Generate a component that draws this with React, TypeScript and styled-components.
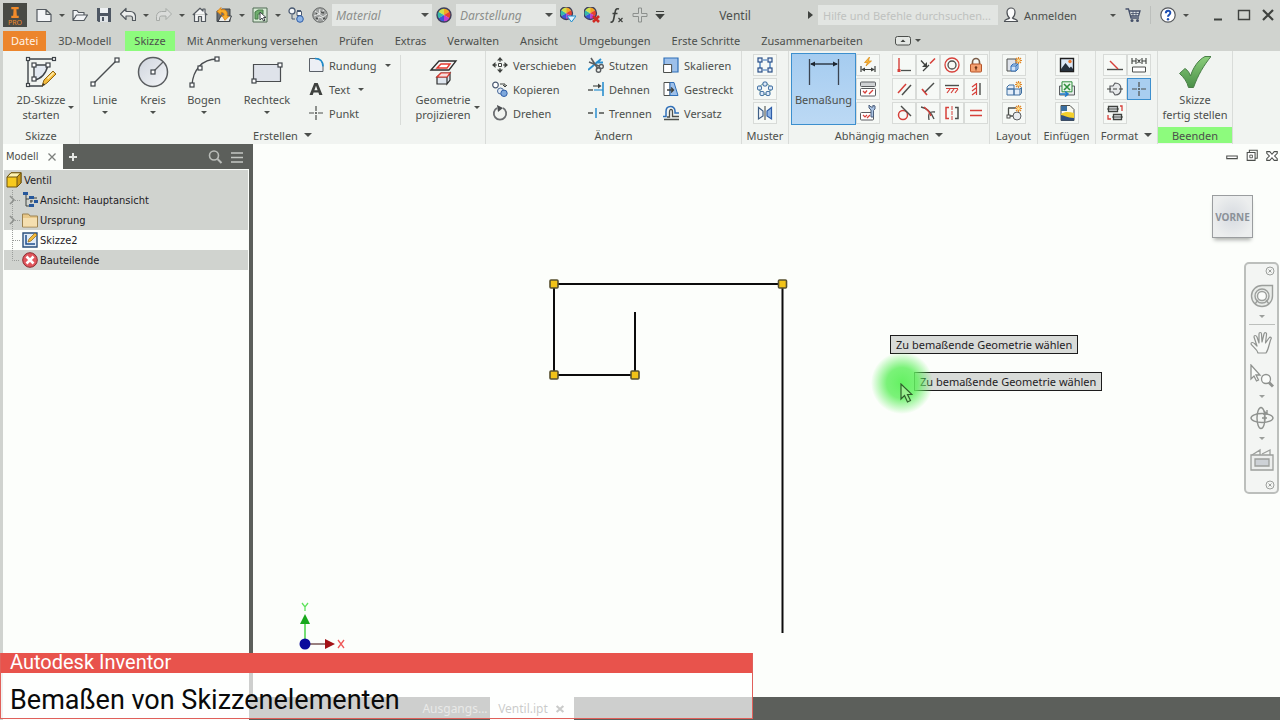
import React, { ReactNode } from "react";
import styled, { createGlobalStyle, css } from "styled-components";

const C = {
  chrome: "#d0d3cf",
  ribbon: "#f1f4f1",
  dark: "#5c5f5b",
  text: "#4c4f4c",
  line: "#d9dcd9",
  paper: "#fcfefb",
  green: "#8dfb7d",
  blue: "#3c8fce",
};

const GlobalStyle = createGlobalStyle`
  *, *::before, *::after { box-sizing: border-box; }
  html, body, #root { height: 100%; }
  body { margin: 0; background: ${C.chrome}; overflow: hidden; }
  body, button, input, select { font-family: "Noto Sans", "Open Sans", sans-serif; font-size: 11px; color: ${C.text}; }
  button { background: none; border: 0; padding: 0; margin: 0; cursor: pointer; }
  svg { display: block; flex: none; }
`;

/* ---------- drawings ---------- */

const node = (x: number, y: number, s = 4) => (
  <rect x={x - s / 2} y={y - s / 2} width={s} height={s} fill="#fff" stroke="#3f4449" strokeWidth="1.200" />
);

const wheel = (
  <>
    <path d="M8 8V1A7 7 0 0 1 14 4.500Z" fill="#f5a623" />
    <path d="M8 8 14 4.500A7 7 0 0 1 14 11.500Z" fill="#e8432e" />
    <path d="M8 8 14 11.500A7 7 0 0 1 8 15Z" fill="#c23bd0" />
    <path d="M8 8V15A7 7 0 0 1 2 11.500Z" fill="#3a57d8" />
    <path d="M8 8 2 11.500A7 7 0 0 1 2 4.500Z" fill="#35b8a8" />
    <path d="M8 8 2 4.500A7 7 0 0 1 8 1Z" fill="#cfe24a" />
    <circle cx="8" cy="8" r="7" fill="none" stroke="#3d3f5c" strokeWidth="1.400" />
  </>
);

const sun = (
  <g stroke="#e08a2c" strokeWidth="1.200">
    <path d="M12.500 0v7M9 3.500h7M10 1l5 5M15 1l-5 5" />
    <circle cx="12.500" cy="3.500" r="1.500" fill="#ffe08a" stroke="none" />
  </g>
);

const art: Record<string, ReactNode> = {
  newFile: <path d="M1 2.500h9l5 5v7H1zM10 2.500v5h5" fill="#f2f4f6" stroke="#53595f" strokeWidth="1.200" />,
  open: <path d="M1 13V3.500h4l1.500 2H12V8M1 13.500 4.500 8H15.500L12 13.500z" fill="#f2f4f6" stroke="#53595f" strokeWidth="1.200" strokeLinejoin="round" />,
  save: (
    <>
      <path d="M1 1h14v14H2.500L1 13.500z" fill="#4e5763" />
      <path d="M4 1h8v5H4z" fill="#eef1f3" />
      <path d="M4 9h8v6H4z" fill="#dfe3e6" />
      <path d="M6 10h2v4H6z" fill="#4e5763" />
    </>
  ),
  undo: <path d="M.5 7 6 1.500v3H10.500a5 5 0 0 1 5 5V13.500h-3V10.500A2 2 0 0 0 10.500 9H6v3.500z" fill="#eceeed" stroke="#53595f" strokeWidth="1.200" strokeLinejoin="round" />,
  redo: <path d="M15.500 7 10 1.500v3H5.500a5 5 0 0 0-5 5V13.500h3V10.500A2 2 0 0 1 5.500 9H10v3.500z" fill="#dadcda" stroke="#a6aaa7" strokeLinejoin="round" />,
  home: <path d="M.8 8 8 1.200 11 4V2h2v4l2.300 2M2.500 7v7.500h4v-5h3v5h4V7" fill="#f4f5f5" stroke="#53595f" strokeWidth="1.200" strokeLinejoin="round" />,
  back: (
    <>
      <path d="M1 4h3.500l1.500-2h8v12.500H1z" fill="#6a6f73" stroke="#3f4449" />
      <path d="M2 14.500 5 9h10.500l-2.500 5.500z" fill="#eceeee" stroke="#3f4449" />
      <path d="M1 4.500 5 .5v2.300c5-1 7 2 6 6.200l2 .3-4 4-3-4.800 2 .2c.5-2-.5-3.500-3-3.400V8z" fill="#f9ae2c" stroke="#d97c12" strokeWidth=".8" />
    </>
  ),
  pick: (
    <>
      <path d="M1 1h14v14H1z" fill="#d7ead5" stroke="#4f6b52" />
      <path d="M3 12V5l3-2h5v4H6v5z" fill="#6fae6d" stroke="#477a48" />
      <path d="M8 5v8l2-2 1.500 3 1.500-.7-1.500-2.800H14z" fill="#fff" stroke="#3f4449" />
    </>
  ),
  linkUp: (
    <>
      <circle cx="4" cy="4" r="3" fill="#f4f6f8" stroke="#4a5a72" strokeWidth="1.300" />
      <path d="M9 3.500h4M4 8v4h3" stroke="#4a5a72" fill="none" />
      <path d="M9 4.500h4.500v4H9z" fill="#fff" stroke="#4a5a72" />
      <circle cx="12" cy="12" r="3.300" fill="#8fb5e6" stroke="#2f5ea8" />
    </>
  ),
  globe: (
    <>
      <circle cx="8" cy="8" r="7.300" fill="#9fa2a1" stroke="#6a6d6c" />
      <path d="M3 4l4 3 5-4M2 9l5-2 4 3 4-3M5 14l2-4 3 1 2 3M7 7l1-5" stroke="#e6e8e7" fill="none" />
      <path d="M4 11l2 1M9 5l3 1M4 6l1 1M11 12l2-1" stroke="#4d504f" strokeWidth="1.500" />
    </>
  ),
  wheel,
  wheelDown: (
    <>
      <g transform="translate(-1 -1) scale(.9)">{wheel}</g>
      <path d="M7 9h9l-4.500 6z" fill="#dff3ff" stroke="#1c8ccc" />
    </>
  ),
  wheelX: (
    <>
      <g transform="translate(-1 -1) scale(.9)">{wheel}</g>
      <path d="M9 9l6 6M15 9l-6 6" stroke="#cf2a22" strokeWidth="2.600" />
    </>
  ),
  fx: (
    <>
      <path d="M2.500 15c2 .5 2.800-1 3.200-3L7.200 4.500C7.600 2 9 1.300 11 2M4.500 6.500h5" stroke="#3d403d" strokeWidth="1.600" fill="none" />
      <path d="M10.500 11l4 4M14.500 11l-4 4" stroke="#3d403d" strokeWidth="1.200" />
    </>
  ),
  plus: <path d="M6.500 1h3v5.500H15v3H9.500V15h-3V9.500H1v-3h5.500z" fill="#d2d5d2" stroke="#8c908d" />,
  menuCaret: <path d="M4 4.500h8M4.500 7.500h7L8 11.500z" stroke="#3f423f" strokeWidth="1.200" fill="#3f423f" />,
  user: <path d="M1.500 14.500c0-2.500 3.500-2 5-3.500C4.500 9.500 4 7 4 5a4 4 0 0 1 8 0c0 2-.5 4.500-2.500 6 1.500 1.500 5 1 5 3.500z" fill="#fbfcfc" stroke="#4c5055" strokeWidth="1.200" />,
  cart: (
    <>
      <path d="M.5 2h3l2.500 9h8M4 4h11l-1.500 5H5.500" fill="#dfe3e6" stroke="#455069" strokeWidth="1.300" />
      <path d="M6 6.500h8M8 4v5M11 4v5" stroke="#455069" strokeWidth=".8" />
      <circle cx="7" cy="13.500" r="1.500" fill="#455069" />
      <circle cx="12.500" cy="13.500" r="1.500" fill="#455069" />
    </>
  ),
  help: (
    <>
      <circle cx="8" cy="8" r="7.200" fill="#fff" stroke="#55585c" strokeWidth="1.200" />
      <path d="M5.800 6.300C5.800 3 10.500 3 10.300 6 10.200 7.800 8 7.600 8 9.800" stroke="#1e50b4" strokeWidth="2" fill="none" />
      <circle cx="8" cy="12.200" r="1.200" fill="#1e50b4" />
    </>
  ),
  min: <path d="M4 11.500h8v2H4z" fill="#3f423f" />,
  max: <path d="M2.500 3.500h11v9h-11z" fill="none" stroke="#3f423f" strokeWidth="1.400" />,
  close: <path d="M3 3l10 10M13 3 3 13" stroke="#3f423f" strokeWidth="2.200" />,
  /* sketch tools, 32px */
  sketch2d: (
    <>
      <path d="M10 10h12c-1 7-5 12-12 14z" fill="#e3e9f1" />
      <path d="M3 3h27M3 3v27h15M9 9h15M9 9v15c8-1 12-7 14-15" fill="none" stroke="#3f4449" strokeWidth="1.400" />
      {node(3, 3, 3)}{node(29, 3, 3)}{node(3, 29, 3)}{node(9, 9)}{node(23, 9)}{node(9, 23)}
      <path d="M17 30l2-6 9-9 3 3-9 9z" fill="#f4bb3c" stroke="#8f6512" />
      <path d="M22 22l6-6 1.200 1.200-6 6z" fill="#fde9a6" />
      <path d="M17 30l1.200-3 2 2z" fill="#333" />
    </>
  ),
  line: (
    <>
      <path d="M4 28 28 4" stroke="#4a4d50" strokeWidth="1.400" />
      {node(4, 28)}{node(28, 4)}
    </>
  ),
  circle: (
    <>
      <defs>
        <linearGradient id="discFill" x1="0" y1="0" x2="1" y2="1">
          <stop offset="0" stopColor="#cfd4dd" />
          <stop offset="1" stopColor="#f4f6f8" />
        </linearGradient>
      </defs>
      <circle cx="16" cy="16" r="14.500" fill="url(#discFill)" stroke="#5a5d60" strokeWidth="1.500" />
      <path d="M16 16 26 6" stroke="#5a5d60" strokeWidth="1.200" />
      {node(16, 16)}
    </>
  ),
  arc: (
    <>
      <path d="M4 29C5 14 14 3 29 3" fill="none" stroke="#4a4d50" strokeWidth="1.400" />
      {node(4, 29)}{node(12, 12)}{node(29, 3)}
    </>
  ),
  rect: (
    <>
      <path d="M2.500 8.500h27v17h-27z" fill="#dfe3ea" stroke="#4a4d50" strokeWidth="1.200" />
      {node(29, 9)}{node(3, 25)}
    </>
  ),
  project: (
    <>
      <path d="M4 14 12 5h17l-7 9z" fill="#f5f5f5" stroke="#2d2d2d" strokeWidth="1.300" />
      <path d="M10 12 14 8h9l-3 4z" fill="#fff" stroke="#e4382e" strokeWidth="1.400" />
      <path d="M10 21l4-4h9l-3 4zM10 21h10v7H10zM20 21l3-4v7l-3 4z" fill="#dfe6ee" stroke="#2d2d2d" strokeWidth="1.200" />
      <path d="M10 21l4-4h9l-3 4z" fill="#f7dedc" stroke="#e4382e" strokeWidth="1.200" />
    </>
  ),
  dimension: (
    <>
      <path d="M1.500 3v26M30.500 3v26" stroke="#3a4452" strokeWidth="1.300" />
      <path d="M3 8h26" stroke="#1e2630" strokeWidth="1.300" />
      <path d="M2 8l5-2.500v5zM30 8l-5-2.500v5z" fill="#1e2630" />
    </>
  ),
  check: (
    <>
      <defs>
        <linearGradient id="checkFill" x1="0" y1="0" x2="0" y2="1">
          <stop offset="0" stopColor="#8ccf7c" />
          <stop offset="1" stopColor="#4a8f48" />
        </linearGradient>
      </defs>
      <path d="M.5 17.500l5.500-5c3 2 4.500 4.500 5.500 7.500C14 12 19 4 26 .5h6C25 9 19 19 14.500 31.500h-5C8 25.500 5 21.500.5 17.500z" fill="url(#checkFill)" stroke="#4a7f48" strokeLinejoin="round" />
    </>
  ),
  /* small tools, 16px */
  fillet: (
    <>
      <path d="M1.500 14.500v-13H7c5 0 8 3 8 8v5z" fill="#eceff5" stroke="#5a6068" />
      <path d="M7 1.500c5 0 8 3 8 8" fill="none" stroke="#1c8ccc" strokeWidth="1.600" />
    </>
  ),
  text: <path d="M1.500 14 6.300 2h3.400l4.800 12h-3.200l-.9-2.500H5.600L4.700 14zM6.400 9.200h3.200L8 4.700z" fill="#3f423f" fillRule="evenodd" />,
  point: <path d="M8 1v5M8 10v5M1 8h5M10 8h5M8 7v2M7 8h2" stroke="#4c4f4c" strokeWidth="1.200" />,
  move: (
    <>
      <path d="M8 0l3 3.500H5zM8 16l3-3.500H5zM0 8l3.500-3v6zM16 8l-3.500-3v6z" fill="#3f423f" />
      <path d="M8 3v2M8 11v2M3 8h2M11 8h2" stroke="#3f423f" />
      <path d="M6.500 6.500h3v3h-3z" fill="#fff" stroke="#3f423f" />
    </>
  ),
  copy: (
    <>
      <circle cx="3.500" cy="4" r="2.800" fill="#fff" stroke="#4a5a72" strokeWidth="1.200" />
      <path d="M8 3h5v2.500M11 4l2 2 2-2" fill="none" stroke="#3f423f" />
      <circle cx="8.500" cy="10" r="3" fill="#dfe9f5" stroke="#4a6a9a" />
      <circle cx="12" cy="12.300" r="3.200" fill="#7ea8dc" stroke="#2f5ea8" />
    </>
  ),
  rotate: (
    <>
      <path d="M5 3A6.200 6.200 0 1 0 11 3" fill="none" stroke="#6a6d70" strokeWidth="1.800" />
      <path d="M5 0l6 3-5 4z" fill="#4a4d50" />
    </>
  ),
  trim: (
    <>
      <path d="M0 13 13 2M8 5.500h7" stroke="#2a8fd0" strokeWidth="1.900" />
      <path d="M3 1l7 11M1 5l10 4" stroke="#5a5d60" strokeWidth="1.600" />
      <circle cx="10.500" cy="13" r="2.200" fill="none" stroke="#5a5d60" strokeWidth="1.400" />
      <circle cx="13.300" cy="9.500" r="2" fill="none" stroke="#5a5d60" strokeWidth="1.400" />
    </>
  ),
  extend: (
    <>
      <path d="M0 9h5" stroke="#4c4f4c" strokeWidth="1.400" />
      <path d="M5 5h6" stroke="#4c4f4c" strokeWidth="1.200" />
      <path d="M6 9h9" stroke="#2a8fd0" strokeWidth="1.200" />
      <path d="M10 2.500 13.500 5 10 7.500z" fill="#3f423f" />
      <path d="M15 1v14" stroke="#2a8fd0" strokeWidth="1.600" />
    </>
  ),
  split: (
    <>
      <path d="M0 8h5M11 8h5" stroke="#4c4f4c" strokeWidth="1.300" />
      <path d="M8 3v10" stroke="#2a8fd0" strokeWidth="1.500" />
    </>
  ),
  scale: (
    <>
      <path d="M1 1h14v14H1z" fill="#9dc0ea" stroke="#2f6fb8" strokeWidth="1.200" />
      <path d="M.6 7.500h8v8h-8z" fill="#fff" stroke="#4c4f4c" />
    </>
  ),
  stretch: (
    <>
      <path d="M1 1.500h6v13H1z" fill="#fff" stroke="#4c4f4c" />
      <path d="M7 1.500h4l4 13H7z" fill="#9dc0ea" stroke="#2f6fb8" />
      <path d="M4 9h6M8 6.500 10.500 9 8 11.500" stroke="#3f423f" strokeWidth="1.400" fill="none" />
    </>
  ),
  offset: (
    <>
      <path d="M0 11.500h3V6.500C3 0 12 0 12 6v2h4" fill="none" stroke="#2f6fb8" strokeWidth="1.500" />
      <path d="M1 14.500h15M4 12h2.500V7c0-3.500 3-3.500 3 0v4.500H16" fill="none" stroke="#4c4f4c" strokeWidth="1.300" />
    </>
  ),
  pattern: (
    <>
      <path d="M3 5v6M6 3h4M13 5v6M6 13h4" stroke="#2f6fb8" strokeWidth="1.200" />
      {[[3, 3], [13, 3], [3, 13], [13, 13]].map(([x, y]) => (
        <rect key={`${x}-${y}`} x={x - 2} y={y - 2} width="4" height="4" fill="#e5eefa" stroke="#2a4f86" strokeWidth="1.200" />
      ))}
    </>
  ),
  circular: (
    <>
      <circle cx="8" cy="8" r="5.500" fill="none" stroke="#6d9c8c" />
      {[[8, 3], [2.500, 7], [13.500, 7], [5, 12.500], [11, 12.500]].map(([x, y]) => (
        <rect key={`${x}-${y}`} x={x - 2} y={y - 2} width="4" height="4" rx="1.200" fill="#dce9f7" stroke="#2a5f96" />
      ))}
    </>
  ),
  mirror: (
    <>
      <path d="M1.500 2.500 6 6v5l-4.500 3z" fill="#f2f5f9" stroke="#3f5f86" strokeWidth="1.200" />
      <path d="M14.500 2.500 10 6v5l4.500 3z" fill="#8fb5e6" stroke="#2f5ea8" strokeWidth="1.200" />
      <path d="M8 1v14" stroke="#3f423f" />
    </>
  ),
  autoDim: (
    <>
      <path d="M9.500 0 4.500 5.500h3L6 9l5.500-5H8.500z" fill="#f9b233" stroke="#d98a12" strokeWidth=".7" />
      <path d="M1 9v6M15 9v6M2 12.500h12" stroke="#3f423f" strokeWidth="1.200" />
      <path d="M1 12.500l4-2v4zM15 12.500l-4-2v4z" fill="#3f423f" />
    </>
  ),
  showCon: (
    <>
      <rect x=".5" y="1" width="15" height="4.500" rx="1" fill="#cfd2d4" stroke="#5a5d60" />
      <rect x=".5" y="7.500" width="15" height="7.500" rx="1" fill="#fff" stroke="#5a5d60" />
      <path d="M3 10l2 2 2-2.500M9 13l4-4" stroke="#d6403a" strokeWidth="1.300" fill="none" />
    </>
  ),
  conSet: (
    <>
      <rect x=".5" y="7.500" width="13" height="7.500" rx="1" fill="#fff" stroke="#5a5d60" />
      <path d="M3 10l2 2 2-2M7 13l3-3" stroke="#d6403a" strokeWidth="1.200" fill="none" />
      <path d="M11 12V5l-2-2V0l2 2h2V0l2 1v3l-1.500 1.500V12z" fill="#a9c3e2" stroke="#4c5f7c" />
    </>
  ),
  coincident: (
    <>
      <path d="M3 1v12" stroke="#d6403a" strokeWidth="1.400" />
      <path d="M5 13.500h10" stroke="#4c4f4c" strokeWidth="1.300" />
      <rect x="1.500" y="12" width="3" height="3" fill="#d6403a" />
    </>
  ),
  collinear: (
    <>
      <path d="M1 3.500 6 9M3 14l6-6" stroke="#3f423f" strokeWidth="1.300" />
      <path d="M10 6.500l5-5" stroke="#d6403a" strokeWidth="1.600" />
      <path d="M7 5v5H2z" fill="#3f423f" />
    </>
  ),
  concentric: (
    <>
      <circle cx="8" cy="8" r="7" fill="none" stroke="#d6403a" strokeWidth="1.300" />
      <circle cx="8" cy="8" r="4" fill="none" stroke="#4c4f4c" strokeWidth="1.300" />
    </>
  ),
  lock: (
    <>
      <path d="M4.500 8V5a3.500 3.500 0 0 1 7 0v3" fill="none" stroke="#7a5c48" strokeWidth="1.600" />
      <rect x="2.500" y="7" width="11" height="8" rx="1" fill="#f5a070" stroke="#b4542a" />
      <circle cx="8" cy="10.500" r="1.300" fill="#6d3418" />
      <path d="M8 11v2.500" stroke="#6d3418" />
    </>
  ),
  parallel: (
    <>
      <path d="M2 12 10 3" stroke="#d6403a" strokeWidth="1.500" />
      <path d="M6 14l9-10" stroke="#4c4f4c" strokeWidth="1.500" />
    </>
  ),
  perpendicular: (
    <>
      <path d="M2 8l5 6" stroke="#d6403a" strokeWidth="1.700" />
      <path d="M5 11l9-9" stroke="#4c4f4c" strokeWidth="1.400" />
    </>
  ),
  horizontal: (
    <>
      <path d="M1 4.500h14" stroke="#4c4f4c" strokeWidth="1.400" />
      <path d="M2 7.500h12M6 8l-3 4M10 8l-3 4M14 8l-3 4" stroke="#d6403a" strokeWidth="1.200" />
    </>
  ),
  vertical: (
    <>
      <path d="M12 2v12" stroke="#4c4f4c" strokeWidth="1.400" />
      <path d="M8.500 2v12M8 3 4 6M8 7l-4 3M8 11l-4 3" stroke="#d6403a" strokeWidth="1.200" />
    </>
  ),
  tangent: (
    <>
      <circle cx="7" cy="10" r="4.500" fill="none" stroke="#d6403a" strokeWidth="1.500" />
      <path d="M5 1l10 10" stroke="#4c4f4c" strokeWidth="1.400" />
    </>
  ),
  smooth: (
    <>
      <path d="M1 2c6 1 10 5 13 12M15 7C9 6 8 9 9 15" fill="none" stroke="#4c4f4c" strokeWidth="1.300" />
      <path d="M4 2c4 3 6 6 7 9" fill="none" stroke="#d6403a" strokeWidth="1.500" />
    </>
  ),
  symmetric: (
    <>
      <path d="M5 2.500H2v11h3" fill="none" stroke="#d6403a" strokeWidth="1.500" />
      <path d="M11 2.500h3v11h-3" fill="none" stroke="#4c4f4c" strokeWidth="1.500" />
      <path d="M8 1v14" stroke="#d6403a" strokeDasharray="4 1" />
    </>
  ),
  equal: <path d="M2 5.500h12M2 10.500h12" stroke="#d6403a" strokeWidth="1.500" />,
  makePart: (
    <>
      <path d="M1 2h9v12H1z" fill="#dfe3ea" stroke="#4c4f4c" />
      <path d="M5 9l2-2h5v5l-2 2H5zM5 9h5v5M10 9l2-2" fill="#cfe2f7" stroke="#2f6fb8" />
      {sun}
    </>
  ),
  makeParts: (
    <>
      <path d="M1 6l2-2h5v4H1zM1 8h7v6H1zM8 8h6v6H8z" fill="#e4eef9" stroke="#3f6fa0" />
      <path d="M14 8l1.500-1.500V12L14 14" stroke="#3f6fa0" />
      {sun}
    </>
  ),
  block: (
    <>
      <path d="M2 3h8M2.500 3v8h5" fill="none" stroke="#4c4f4c" strokeWidth="1.300" />
      <circle cx="11" cy="11" r="4" fill="#e9ecef" stroke="#5a5d60" />
      <rect x="1" y="10" width="3" height="3" fill="#fff" stroke="#4c4f4c" />
      {sun}
    </>
  ),
  image: (
    <>
      <path d="M1.500 1.500h13v13h-13z" fill="#dce8f6" stroke="#1e1e1e" strokeWidth="1.400" />
      <path d="M2 12 6.500 6l4 5 1.500-1.500L14 12v2H2z" fill="#26303c" />
      <circle cx="11" cy="4.500" r="1.700" fill="#e8762c" />
    </>
  ),
  excel: (
    <>
      <path d="M.5 5h15v9H.5z" fill="#e6e9ea" stroke="#5a5d60" />
      <path d="M3 .8h10v10H3z" fill="#eaf6ea" stroke="#2f8f3c" />
      <path d="M5 3l6 6M11 3 5 9" stroke="#2f8f3c" strokeWidth="1.600" />
      <path d="M1 13h7M6 10.500 9 13l-3 2.500" stroke="#1c7ccc" strokeWidth="1.600" fill="none" />
    </>
  ),
  acad: (
    <>
      <path d="M2 .5h9l4 4v11H2z" fill="#f8f8f0" stroke="#4c4f4c" />
      <path d="M2 1h6v5H2z" fill="#3b6f9f" />
      <path d="M2 9c4-3 9-2 13-1v5H2z" fill="#f2cf2c" />
      <path d="M2 10c3 0 6 3 13 3v2.500H2z" fill="#2f4f7f" />
    </>
  ),
  construction: (
    <>
      <path d="M0 12.500h16" stroke="#4c4f4c" strokeWidth="1.400" />
      <path d="M3 4l8 8" stroke="#d6403a" strokeWidth="1.500" />
    </>
  ),
  driven: (
    <>
      <path d="M1 1v6M5 1v6M1 4h4M11 1v6M15 1v6M11 4h4M6.500 2.500l3 3.500M9.500 2.500l-3 3.500" stroke="#3f423f" strokeWidth="1.100" />
      <path d="M1.500 10h13v5h-13z" fill="#fff" stroke="#4c4f4c" />
    </>
  ),
  centerline: (
    <>
      <path d="M3 5h3l2-3c4 0 6 2 6 6s-2 6-6 6l-2-3H3z" fill="#e6e9ea" stroke="#5a5d60" strokeWidth="1.200" />
      <path d="M0 8h4M6 8h4M12 8h4" stroke="#3f423f" strokeWidth="1.200" />
    </>
  ),
  format: (
    <>
      <path d="M1.500 1.500h9v5h-9zM6.500 9.500h8v5h-8z" fill="#e9ecef" stroke="#3f423f" strokeWidth="1.300" />
      <path d="M0 4h12M5 12h11" stroke="#3f423f" />
      <path d="M13 1h2v5M1 10v4h3" stroke="#d6403a" strokeWidth="1.300" fill="none" />
    </>
  ),
  search: (
    <>
      <circle cx="7" cy="6.500" r="4.500" fill="none" stroke="#b9bcb8" strokeWidth="1.600" />
      <path d="M10.500 10l4 4" stroke="#b9bcb8" strokeWidth="2" />
    </>
  ),
  burger: <path d="M2 4h12M2 8.500h12M2 13h12" stroke="#c4c7c3" strokeWidth="1.600" />,
  addTab: <path d="M8 4v8M4 8h8" stroke="#e4e6e3" strokeWidth="2" />,
  tabX: <path d="M4 4l8 8M12 4l-8 8" stroke="#7d807d" strokeWidth="1.500" />,
  docX: <path d="M3.500 4l9 8M12.500 4l-9 8" stroke="#4d504d" strokeWidth="2.800" />,
  part: (
    <>
      <path d="M1 5 5 .8h10V11l-4 4H1z" fill="#f7ca1e" stroke="#6f5510" />
      <path d="M1 5 5 .8h10L11 5z" fill="#fdf3b0" stroke="#6f5510" />
      <path d="M11 5v10l4-4V.8z" fill="#cf9b12" stroke="#6f5510" />
    </>
  ),
  views: (
    <>
      <path d="M4 2v12h3M4 7h3M10 6h5" fill="none" stroke="#3f423f" />
      <path d="M1 0h5v3H1zM7 4h5v3H7zM7 12h5v3H7zM12 8h4v3h-4z" fill="#27589c" />
      <path d="M9 8v3M8 9h3" stroke="#3f423f" />
    </>
  ),
  folder: (
    <>
      <path d="M.5 2h6l1.500 2h7.500v11H.5z" fill="#e9c98a" stroke="#9c8250" />
      <path d="M1 6h14v8.500H1z" fill="#f5dfb0" />
    </>
  ),
  sketch: (
    <>
      <path d="M1 1h14v14H1z" fill="#dfeaf6" stroke="#2a4f7c" strokeWidth="1.400" />
      <path d="M4 3v9h9" fill="none" stroke="#1f4f8f" strokeWidth="1.500" />
      <path d="M6 10l1-3 6-6 2 2-6 6z" fill="#f4bb3c" stroke="#8f6512" strokeWidth=".7" />
    </>
  ),
  endPart: (
    <>
      <circle cx="8" cy="8" r="7.300" fill="#e0565c" stroke="#8d2c32" />
      <path d="M4.500 4.500l7 7M11.500 4.500l-7 7" stroke="#fff" strokeWidth="2.600" />
    </>
  ),
  winMin: <path d="M2 8h12v3H2z" fill="#fff" stroke="#4c4f4c" strokeWidth="1.200" />,
  winRest: (
    <>
      <path d="M5 1.500h9v9H5z" fill="none" stroke="#4c4f4c" strokeWidth="1.200" />
      <path d="M2.500 4h9v9h-9z" fill="#fff" stroke="#4c4f4c" strokeWidth="1.200" />
      <path d="M5.500 7h3v3h-3z" fill="none" stroke="#4c4f4c" />
    </>
  ),
  winX: <path d="M2 3h3.500L8 6l2.500-3H14v2l-3 3 3 3v2h-3.500L8 10l-2.500 3H2v-2l3-3-3-3z" fill="#fff" stroke="#4c4f4c" strokeWidth="1.200" />,
  /* navigation, 24px */
  orbitWheel: (
    <g fill="none" stroke="#9c9f9c" strokeWidth="1.400">
      <path d="M12 1.500h10.500V12A10.500 10.500 0 1 1 12 1.500z" fill="#e9ece9" />
      <circle cx="12" cy="12" r="7" />
      <circle cx="12" cy="12" r="4.500" fill="#fafcfa" />
      <path d="M8 16l-3 4M16 16l3 4" />
    </g>
  ),
  hand: <path d="M8 22c-1-4-5-6-7-9 0-2 2-2 4 0l2 2L4 6c0-2 2-2 3 0l2 6V3c0-2 2.500-2 2.500 0l.5 8 2-8c.5-2 3-1.500 2.500.5L15.500 12l3.500-5c1-1.500 3-.5 2 1-2 4-2 10-5 14z" fill="#f6f8f6" stroke="#8f928f" strokeWidth="1.200" strokeLinejoin="round" />,
  zoomWin: (
    <g stroke="#8f928f" strokeWidth="1.300">
      <path d="M1 1v14l3-3 2.500 5 2-1L6 11h4z" fill="#fafcfa" />
      <circle cx="16" cy="15" r="4.500" fill="#fafcfa" />
      <path d="M19 18.500l4 4" strokeWidth="3" />
    </g>
  ),
  orbit: (
    <g fill="none" stroke="#8f928f" strokeWidth="1.400">
      <ellipse cx="12" cy="12" rx="11" ry="4.500" />
      <ellipse cx="11" cy="12" rx="4" ry="10.500" />
      <path d="M12 12h5M14.500 9.500v5M14 5l3 3M17 4v4h-4" />
    </g>
  ),
  lookAt: (
    <g stroke="#9c9f9c" strokeWidth="1.300">
      <path d="M2 7l8-5v5M12 6l8-4v5" fill="none" />
      <path d="M1 7h22v15H1z" fill="#eceeed" />
      <path d="M5 11h14v7H5z" fill="#cdd1d6" />
    </g>
  ),
  navClose: (
    <g stroke="#9c9f9c" fill="none">
      <circle cx="8" cy="8" r="4" />
      <path d="M6.500 6.500l3 3M9.500 6.500l-3 3" />
    </g>
  ),
};

const large = ["sketch2d", "line", "circle", "arc", "rect", "project", "dimension", "check"];
const medium = ["orbitWheel", "hand", "zoomWin", "orbit", "lookAt"];

const Icon = ({ name, size = 16 }: { name: string; size?: number }) => {
  const box = large.includes(name) ? 32 : medium.includes(name) ? 24 : 16;
  return (
    <svg width={size} height={size} viewBox={`0 0 ${box} ${box}`} fill="none" aria-hidden="true">
      {art[name]}
    </svg>
  );
};

const Caret = styled.span<{ $size?: number }>`
  flex: none;
  width: 0;
  height: 0;
  border: ${(p) => p.$size ?? 3}px solid transparent;
  border-top-color: #4c4f4c;
  border-bottom-width: 0;
`;

/* ---------- shell ---------- */

const Shell = styled.div`
  display: flex;
  flex-direction: column;
  min-height: 100%;
  padding-left: 3px;
  position: relative;
`;

const TitleBar = styled.header`
  display: flex;
  align-items: center;
  height: 30px;
`;

const Logo = styled.div`
  display: flex;
  flex-direction: column;
  align-items: center;
  justify-content: flex-end;
  width: 24px;
  height: 24px;
  margin-right: 5px;
  background: #484a45;
  color: #ef8a2a;
  font-size: 7px;
  line-height: 8px;
`;

const IconButton = styled.button<{ $w?: number }>`
  display: flex;
  align-items: center;
  justify-content: center;
  flex: none;
  width: ${(p) => p.$w ?? 24}px;
  height: 24px;
`;

const Picker = styled.label`
  position: relative;
  display: flex;
  align-items: center;
  width: 100px;
  height: 22px;
  background: #e4e7e4;
  ${Caret} { position: absolute; right: 3px; pointer-events: none; }
`;

const PickerSelect = styled.select`
  appearance: none;
  width: 100%;
  height: 100%;
  padding: 0 16px 0 4px;
  border: 0;
  background: transparent;
  font-style: italic;
  font-size: 12px;
  color: #8c8f8c;
`;

const DocTitle = styled.div`
  flex: 1;
  text-align: center;
  font-size: 12px;
`;

const SearchBox = styled.input`
  width: 180px;
  height: 20px;
  padding: 0 5px;
  border: 0;
  background: #e2e5e2;
  &::placeholder { color: #bfc2bf; opacity: 1; }
`;

const SideCaret = styled.span`
  border: 4px solid transparent;
  border-left: 5px solid #3f423f;
  border-right: 0;
`;

const SignIn = styled.button`
  display: flex;
  align-items: center;
  gap: 5px;
  width: 107px;
  padding-left: 5px;
`;

const Rule = styled.span`
  width: 1px;
  height: 18px;
  margin: 0 5px;
  background: #bcbfbc;
`;

const WindowControls = styled.div`
  display: flex;
  margin-left: 12px;
`;

const Tabs = styled.nav`
  display: flex;
  align-items: center;
  height: 21px;
  gap: 3px;
`;

const Tab = styled.button<{ $kind?: "file" | "active" }>`
  height: 20px;
  padding: 0 9px;
  white-space: nowrap;
  ${(p) => p.$kind === "file" && css`background: #ec852c; color: #fff3e6; padding: 0 8px;`}
  ${(p) => p.$kind === "active" && css`background: ${C.green}; margin-left: 2px;`}
`;

const RibbonToggle = styled.button`
  display: flex;
  align-items: center;
  gap: 4px;
  margin-left: 20px;
`;

/* ---------- ribbon ---------- */

const Ribbon = styled.section`
  display: flex;
  height: 93px;
  background: ${C.ribbon};
`;

const Panel = styled.section<{ $w: number }>`
  display: flex;
  flex-direction: column;
  flex: none;
  width: ${(p) => p.$w}px;
  border-right: 1px solid ${C.line};
`;

const PanelBody = styled.div<{ $center?: boolean; $pad?: number }>`
  display: flex;
  flex: 1;
  justify-content: ${(p) => (p.$center ? "center" : "flex-start")};
  padding: 2px 0 0 ${(p) => p.$pad ?? 0}px;
`;

const PanelLabel = styled.h2<{ $active?: boolean }>`
  display: flex;
  align-items: center;
  justify-content: center;
  gap: 6px;
  height: 16px;
  margin: 0 0 1px;
  font-size: 11px;
  font-weight: 400;
  background: ${(p) => (p.$active ? C.green : "transparent")};
`;

const Big = styled.button<{ $w: number; $active?: boolean }>`
  position: relative;
  display: flex;
  flex-direction: column;
  align-items: center;
  flex: none;
  gap: 4px;
  width: ${(p) => p.$w}px;
  height: 72px;
  padding-top: 3px;
  line-height: 15px;
  white-space: pre-line;
  ${(p) => p.$active && css`
    background: linear-gradient(#a5ccf0, #bcd9f4);
    box-shadow: inset 0 0 0 1px ${C.blue};
  `}
`;

const SideMark = styled.span`
  position: absolute;
  display: flex;
  right: 5px;
  top: 53px;
`;

const Column = styled.div<{ $w?: number; $pad?: number }>`
  display: flex;
  flex-direction: column;
  flex: none;
  width: ${(p) => (p.$w ? `${p.$w}px` : "auto")};
  padding-left: ${(p) => p.$pad ?? 0}px;
`;

const Small = styled.button`
  display: flex;
  align-items: center;
  gap: 5px;
  height: 24px;
  white-space: nowrap;
  ${Caret} { margin-left: 3px; }
`;

const Divider = styled.span`
  width: 1px;
  height: 70px;
  margin-top: 2px;
  background: ${C.line};
`;

const ToolGrid = styled.div<{ $cols: number }>`
  display: grid;
  grid-template-columns: repeat(${(p) => p.$cols}, 24px);
  grid-auto-rows: 22px;
  row-gap: 2px;
  align-content: start;
  padding-top: 1px;
`;

const Tool = styled.button<{ $on?: boolean }>`
  display: flex;
  align-items: center;
  justify-content: center;
  background: ${(p) => (p.$on ? "#a9cef0" : "#f6f9f6")};
  box-shadow: inset 0 0 0 1px ${(p) => (p.$on ? C.blue : "#d8dbd8")};
`;

/* ---------- workspace ---------- */

const Workspace = styled.main`
  display: flex;
  flex: 1;
  min-height: 0;
`;

const Browser = styled.aside`
  display: flex;
  flex-direction: column;
  width: 250px;
  flex: none;
  border-right: 4px solid ${C.dark};
  background: ${C.paper};
  font-family: "DejaVu Sans Condensed", "DejaVu Sans", sans-serif;
  font-size: 11px;
`;

const BrowserTabs = styled.div`
  display: flex;
  align-items: center;
  height: 25px;
  padding-right: 1px;
  background: ${C.dark};
`;

const BrowserTab = styled.div`
  display: flex;
  align-items: center;
  justify-content: space-between;
  width: 60px;
  height: 100%;
  padding: 0 4px 0 3px;
  background: ${C.paper};
`;

const Spacer = styled.span`
  flex: 1;
`;

const Tree = styled.ul`
  list-style: none;
  margin: 0 1px;
  padding: 1px 0 0;
  color: #1f211f;
`;

const Branch = styled.li<{ $lit?: boolean; $root?: boolean }>`
  display: flex;
  align-items: center;
  gap: 2px;
  height: 20px;
  padding-left: ${(p) => (p.$root ? 2 : 4)}px;
  background: ${(p) => (p.$lit ? C.paper : C.chrome)};
`;

const Connector = ({ expandable, last }: { expandable?: boolean; last?: boolean }) => (
  <svg width="12" height="20" viewBox="0 0 12 20" fill="none" aria-hidden="true">
    <path d={last ? "M4.500 0v10.500H12" : "M4.500 0v20M5 10.500h7"} stroke="#9a9d9a" strokeDasharray="1 1" />
    {expandable && <path d="M2 6l4 4-4 4" stroke="#8f928f" strokeWidth="1.600" />}
  </svg>
);

const Viewport = styled.section`
  position: relative;
  flex: 1;
  min-width: 0;
  display: flex;
  flex-direction: column;
  justify-content: flex-end;
  background: ${C.paper};
`;

const Sketch = styled.svg`
  position: absolute;
  left: 0;
  top: 0;
`;

const Hint = styled.div<{ $x: number; $y: number }>`
  position: absolute;
  left: ${(p) => p.$x}px;
  top: ${(p) => p.$y}px;
  height: 19px;
  padding: 0 5px;
  border: 1px solid #1c1c1c;
  background: #d8dbd8;
  color: #1f211f;
  line-height: 17px;
  white-space: nowrap;
`;

const Halo = styled.div`
  position: absolute;
  left: 618px;
  top: 208px;
  width: 62px;
  height: 62px;
  border-radius: 50%;
  background: radial-gradient(circle, rgba(92, 240, 90, 0.95) 0, rgba(100, 240, 98, 0.85) 35%, rgba(130, 245, 128, 0) 71%);
`;

const Pointer = styled.svg`
  position: absolute;
  left: 647px;
  top: 239px;
`;

const Triad = styled.svg`
  position: absolute;
  left: 40px;
  bottom: 68px;
`;

const WindowButtons = styled.div`
  position: absolute;
  right: 0;
  top: 0;
  display: flex;
  gap: 4px;
`;

const ViewCube = styled.button`
  position: absolute;
  right: 27px;
  top: 51px;
  width: 41px;
  height: 43px;
  border: 1px solid #9a9d9f;
  background: radial-gradient(#d6dae0, #eceeee 75%);
  box-shadow: 0 4px 4px -2px #aaadaa;
  color: #8b9198;
  font-size: 10px;
  font-weight: 700;
`;

const NavBar = styled.div`
  position: absolute;
  right: 1px;
  top: 118px;
  display: flex;
  flex-direction: column;
  align-items: center;
  width: 35px;
  height: 232px;
  border: 2px solid #bcbfbc;
  border-radius: 5px;
  background: #f3f5f3;
`;

const NavEnd = styled.button`
  align-self: flex-end;
  height: 14px;
  width: 14px;
  display: flex;
  align-items: center;
  justify-content: center;
`;

const NavTool = styled.button<{ $h: number }>`
  display: flex;
  flex-direction: column;
  align-items: center;
  width: 100%;
  height: ${(p) => p.$h}px;
  padding-top: 6px;
  gap: 7px;
  ${Caret} { border-top-color: #9c9f9c; }
`;

const NavRule = styled.hr`
  width: 26px;
  margin: 0;
  border: 0;
  border-top: 1px solid #bcbfbc;
`;

const DocBar = styled.div`
  display: flex;
  height: 23px;
  padding-left: 167px;
  background: ${C.dark};
`;

const DocTab = styled.button<{ $active?: boolean; $w: number }>`
  display: flex;
  align-items: center;
  justify-content: center;
  gap: 6px;
  width: ${(p) => p.$w}px;
  font-size: 12px;
  color: ${(p) => (p.$active ? "#4f524f" : "#b4b6b3")};
  background: ${(p) => (p.$active ? C.paper : "transparent")};
`;

const Banner = styled.div`
  position: absolute;
  left: 0;
  bottom: 1px;
  width: 753px;
  border: 1px solid #e0605a;
  border-top: 0;
  font-family: Roboto, sans-serif;
`;

const BannerTop = styled.p`
  margin: 0;
  height: 20px;
  padding-left: 9px;
  background: #e8534c;
  color: #fff;
  font-size: 20px;
  line-height: 19px;
`;

const BannerTitle = styled.h1`
  margin: 0;
  height: 45px;
  padding-left: 9px;
  background: rgba(255, 255, 255, 0.7);
  color: #0a0a0a;
  font-size: 27px;
  font-weight: 400;
  line-height: 54px;
`;

/* ---------- page ---------- */

const T = ({ n, w }: { n: string; w?: number }) => (
  <IconButton $w={w} aria-label={n}><Icon name={n} /></IconButton>
);
const Drop = ({ w = 12 }: { w?: number }) => (
  <IconButton $w={w} aria-label="Mehr"><Caret /></IconButton>
);
const SmallTool = ({ icon, label, drop }: { icon: string; label: string; drop?: boolean }) => (
  <Small><Icon name={icon} />{label}{drop && <Caret />}</Small>
);
const BigTool = ({ icon, label, w, below, side }: { icon: string; label: string; w: number; below?: boolean; side?: boolean }) => (
  <Big $w={w}>
    <Icon name={icon} size={32} />
    <span>{label}</span>
    {below && <Caret />}
    {side && <SideMark><Caret /></SideMark>}
  </Big>
);
const Tools = ({ cols = 1, names, on }: { cols?: number; names: string[]; on?: string }) => (
  <ToolGrid $cols={cols}>
    {names.map((n) => <Tool key={n} $on={n === on} aria-label={n}><Icon name={n} /></Tool>)}
  </ToolGrid>
);

const tabs = ["Mit Anmerkung versehen", "Prüfen", "Extras", "Verwalten", "Ansicht", "Umgebungen", "Erste Schritte", "Zusammenarbeiten"];

export default function App() {
  return (
    <Shell>
      <GlobalStyle />
      <TitleBar>
        <Logo>
          <svg width="10" height="13" viewBox="0 0 10 14"><path d="M1 1h8v2.500H6.500L7 10.500h2V13H1v-2.500h2L3.500 3.500H1z" fill="#f08a2a" /></svg>
          PRO
        </Logo>
        <T n="newFile" /><Drop /><T n="open" /><T n="save" /><T n="undo" /><Drop /><T n="redo" /><Drop />
        <T n="home" /><T n="back" /><Drop /><T n="pick" /><Drop /><T n="linkUp" /><T n="globe" />
        <Picker>
          <PickerSelect aria-label="Material"><option>Material</option></PickerSelect>
          <Caret $size={4} />
        </Picker>
        <T n="wheel" />
        <Picker>
          <PickerSelect aria-label="Darstellung"><option>Darstellung</option></PickerSelect>
          <Caret $size={4} />
        </Picker>
        <T n="wheelDown" /><T n="wheelX" /><T n="fx" /><T n="plus" /><T n="menuCaret" w={16} />
        <DocTitle>Ventil</DocTitle>
        <IconButton $w={16} aria-label="Suche einblenden"><SideCaret /></IconButton>
        <SearchBox aria-label="Suche" placeholder="Hilfe und Befehle durchsuchen..." />
        <SignIn><Icon name="user" />Anmelden</SignIn>
        <Drop w={16} /><T n="cart" /><Rule /><T n="help" /><Drop />
        <WindowControls><T n="min" w={28} /><T n="max" /><T n="close" /></WindowControls>
      </TitleBar>

      <Tabs>
        <Tab $kind="file">Datei</Tab>
        <Tab>3D-Modell</Tab>
        <Tab $kind="active">Skizze</Tab>
        {tabs.map((t) => <Tab key={t}>{t}</Tab>)}
        <RibbonToggle aria-label="Multifunktionsleiste minimieren">
          <svg width="16" height="10" viewBox="0 0 16 10"><rect x=".5" y=".5" width="15" height="8.500" rx="2" fill="#e4e7e4" stroke="#4c4f4c" /><path d="M5.500 6 8 3.500 10.500 6z" fill="#3f423f" /></svg>
          <Caret />
        </RibbonToggle>
      </Tabs>

      <Ribbon>
        <Panel $w={77}>
          <PanelBody><BigTool icon="sketch2d" label={"2D-Skizze\nstarten"} w={76} side /></PanelBody>
          <PanelLabel>Skizze</PanelLabel>
        </Panel>
        <Panel $w={406}>
          <PanelBody $pad={1}>
            <BigTool icon="line" label="Linie" w={48} below />
            <BigTool icon="circle" label="Kreis" w={48} below />
            <BigTool icon="arc" label="Bogen" w={54} below />
            <BigTool icon="rect" label="Rechteck" w={72} below />
            <Column $w={97} $pad={5}>
              <SmallTool icon="fillet" label="Rundung" drop />
              <SmallTool icon="text" label="Text" drop />
              <SmallTool icon="point" label="Punkt" />
            </Column>
            <Divider />
            <BigTool icon="project" label={"Geometrie\nprojizieren"} w={84} side />
          </PanelBody>
          <PanelLabel>Erstellen<Caret $size={4} /></PanelLabel>
        </Panel>
        <Panel $w={256}>
          <PanelBody $pad={6}>
            <Column $w={96}>
              <SmallTool icon="move" label="Verschieben" />
              <SmallTool icon="copy" label="Kopieren" />
              <SmallTool icon="rotate" label="Drehen" />
            </Column>
            <Column $w={75}>
              <SmallTool icon="trim" label="Stutzen" />
              <SmallTool icon="extend" label="Dehnen" />
              <SmallTool icon="split" label="Trennen" />
            </Column>
            <Column>
              <SmallTool icon="scale" label="Skalieren" />
              <SmallTool icon="stretch" label="Gestreckt" />
              <SmallTool icon="offset" label="Versatz" />
            </Column>
          </PanelBody>
          <PanelLabel>Ändern</PanelLabel>
        </Panel>
        <Panel $w={47}>
          <PanelBody $center><Tools names={["pattern", "circular", "mirror"]} /></PanelBody>
          <PanelLabel>Muster</PanelLabel>
        </Panel>
        <Panel $w={201}>
          <PanelBody $pad={2}>
            <Big $w={65} $active><Icon name="dimension" size={32} /><span>Bemaßung</span></Big>
            <Column $w={36}><Tools names={["autoDim", "showCon", "conSet"]} /></Column>
            <Tools cols={4} names={["coincident", "collinear", "concentric", "lock", "parallel", "perpendicular", "horizontal", "vertical", "tangent", "smooth", "symmetric", "equal"]} />
          </PanelBody>
          <PanelLabel>Abhängig machen<Caret $size={4} /></PanelLabel>
        </Panel>
        <Panel $w={48}>
          <PanelBody $center><Tools names={["makePart", "makeParts", "block"]} /></PanelBody>
          <PanelLabel>Layout</PanelLabel>
        </Panel>
        <Panel $w={58}>
          <PanelBody $center><Tools names={["image", "excel", "acad"]} /></PanelBody>
          <PanelLabel>Einfügen</PanelLabel>
        </Panel>
        <Panel $w={62}>
          <PanelBody $center><Tools cols={2} names={["construction", "driven", "centerline", "point", "format"]} on="point" /></PanelBody>
          <PanelLabel>Format<Caret $size={4} /></PanelLabel>
        </Panel>
        <Panel $w={75}>
          <PanelBody><BigTool icon="check" label={"Skizze\nfertig stellen"} w={74} /></PanelBody>
          <PanelLabel $active>Beenden</PanelLabel>
        </Panel>
      </Ribbon>

      <Workspace>
        <Browser>
          <BrowserTabs>
            <BrowserTab>Modell<Icon name="tabX" size={14} /></BrowserTab>
            <T n="addTab" w={20} />
            <Spacer />
            <T n="search" w={22} /><T n="burger" w={22} />
          </BrowserTabs>
          <Tree>
            <Branch $root><Icon name="part" />Ventil</Branch>
            <Branch><Connector expandable /><Icon name="views" />Ansicht: Hauptansicht</Branch>
            <Branch><Connector expandable /><Icon name="folder" />Ursprung</Branch>
            <Branch $lit><Connector /><Icon name="sketch" />Skizze2</Branch>
            <Branch><Connector last /><Icon name="endPart" />Bauteilende</Branch>
          </Tree>
        </Browser>

        <Viewport>
          <Sketch width="560" height="500" viewBox="0 0 560 500" fill="none">
            <path d="M382 168v63M301 231V140H529.500V489M301 231h81" stroke="#0c0c0c" strokeWidth="2" />
            {[[301, 140], [529.5, 140], [301, 231], [382, 231]].map(([x, y]) => (
              <rect key={`${x}-${y}`} x={x - 4} y={y - 4} width="8" height="8" rx="1" fill="#f2c318" stroke="#57502f" strokeWidth="1.600" />
            ))}
          </Sketch>
          <Hint $x={637} $y={191}>Zu bemaßende Geometrie wählen</Hint>
          <Hint $x={661} $y={228}>Zu bemaßende Geometrie wählen</Hint>
          <Halo />
          <Pointer width="13" height="20" viewBox="0 0 13 20">
            <path d="M1 1v15l3.500-3.500L7.500 19l3-1.500L7.500 11.500H12z" fill="#9af08f" stroke="#2f5f2c" strokeWidth="1.200" />
          </Pointer>
          <Triad width="54" height="54" viewBox="0 0 54 54" fill="none">
            <path d="M12 46V20" stroke="#3ccf3a" strokeWidth="1.400" />
            <path d="M12 46h22" stroke="#6f4a4a" strokeWidth="1.400" />
            <path d="M12 16l5 10H7z" fill="#18a81c" />
            <path d="M42 46l-10-5v10z" fill="#a31216" />
            <circle cx="12" cy="46" r="5.500" fill="#0a0a9c" />
            <path d="M9 5l3 4 3-4M12 9v4" stroke="#5fe35c" strokeWidth="1.300" />
            <path d="M45 42l6 8M51 42l-6 8" stroke="#ee5a5a" strokeWidth="1.300" />
          </Triad>
          <WindowButtons>
            <IconButton $w={16} aria-label="Minimieren"><Icon name="winMin" size={14} /></IconButton>
            <IconButton $w={16} aria-label="Wiederherstellen"><Icon name="winRest" size={14} /></IconButton>
            <IconButton $w={16} aria-label="Schließen"><Icon name="winX" size={14} /></IconButton>
          </WindowButtons>
          <ViewCube>VORNE</ViewCube>
          <NavBar>
            <NavEnd aria-label="Leiste schließen"><Icon name="navClose" /></NavEnd>
            <NavTool $h={46} aria-label="Navigationsrad"><Icon name="orbitWheel" size={24} /><Caret /></NavTool>
            <NavRule />
            <NavTool $h={33} aria-label="Pan"><Icon name="hand" size={24} /></NavTool>
            <NavTool $h={42} aria-label="Zoom"><Icon name="zoomWin" size={24} /><Caret /></NavTool>
            <NavTool $h={42} aria-label="Orbit"><Icon name="orbit" size={24} /><Caret /></NavTool>
            <NavTool $h={36} aria-label="Ansicht von"><Icon name="lookAt" size={24} /></NavTool>
            <NavEnd aria-label="Optionen"><Icon name="navClose" /></NavEnd>
          </NavBar>
          <DocBar>
            <DocTab $w={70}>Ausgangs...</DocTab>
            <DocTab $w={84} $active>Ventil.ipt<Icon name="docX" size={12} /></DocTab>
          </DocBar>
        </Viewport>
      </Workspace>

      <Banner>
        <BannerTop>Autodesk Inventor</BannerTop>
        <BannerTitle>Bemaßen von Skizzenelementen</BannerTitle>
      </Banner>
    </Shell>
  );
}
